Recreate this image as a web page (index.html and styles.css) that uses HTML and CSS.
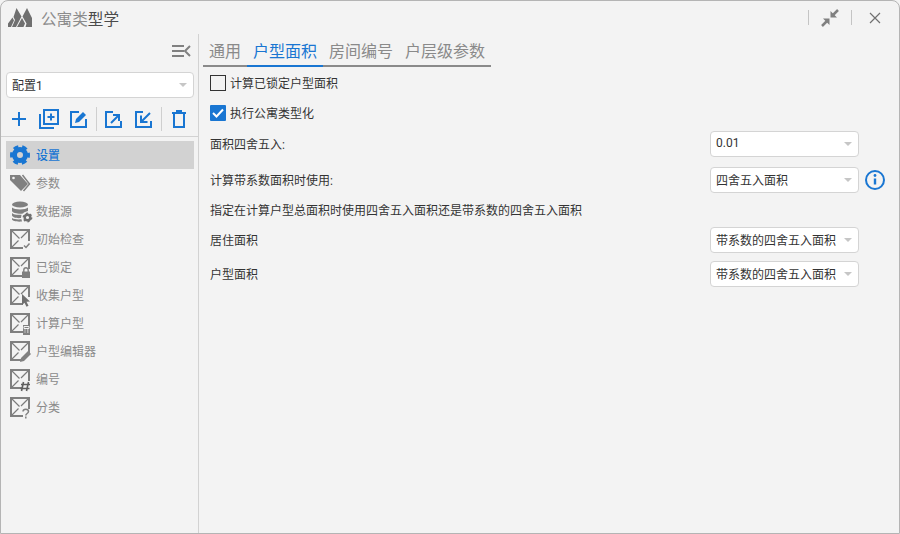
FILE: index.html

```html
<!DOCTYPE html>
<html lang="zh">
<head>
    <meta charset="UTF-8">
    <title>公寓类型学</title>
    <link rel="stylesheet" href="styles.css">
</head>
<body>
    <svg class="defs" width="0" height="0">
        <symbol id="unit" viewBox="0 0 20 20">
            <path d="M13 19H1V1h18v11" fill="none" stroke="#808080" stroke-width="2"/>
            <path d="M1 1l8.500 8.500M19 1l-8 8M1 19l7.500-7.500" fill="none" stroke="#7c7c7c" stroke-width="1.200"/>
        </symbol>
    </svg>
    <div class="window">
        <div class="titlebar">
            <svg class="logo" width="24" height="19" viewBox="0 0 24 19">
                <path d="M8.500 0l5 8.500L8 19H4l3-7-1.500-3zM4.500 9.500l1.500 3L3 19H0v-3.500zM14 10l3 5.500-1.500 3.500H9zM19 0l5 10v9h-6.500l1-3.500-4-7z" fill="#6f6f6f"/>
            </svg>
            <div class="title">公寓类<span class="dark">型学</span></div>
            <div class="winbtns">
                <span class="winsep"></span>
                <svg class="winbtn" width="18" height="18" viewBox="0 0 18 18">
                    <path d="M9.500 8.500V2l6.500 6.500zM8.500 9.500V16L2 9.500z" fill="#808080"/>
                    <path d="M17 1l-5 5M1 17l5-5" stroke="#808080" stroke-width="2.500"/>
                </svg>
                <span class="winsep sep2"></span>
                <svg class="winbtn close" width="12" height="12" viewBox="0 0 12 12">
                    <path d="M1 1l10 10M11 1L1 11" stroke="#707070" stroke-width="1.200" fill="none"/>
                </svg>
            </div>
        </div>
        <div class="body">
            <div class="sidebar">
                <div class="collapse">
                    <svg width="19" height="12" viewBox="0 0 19 12">
                        <path d="M0 1h12M0 6h12M0 11h12M18 1l-5 5 5 5" stroke="#808080" stroke-width="2" fill="none"/>
                    </svg>
                </div>
                <div class="select cfg"><span>配置1</span><i class="arrow"></i></div>
                <div class="toolbar">
                    <div class="tool"><svg width="16" height="16" viewBox="0 0 16 16"><path d="M8 1v14M1 8h14" stroke="#1976d2" stroke-width="2" fill="none"/></svg></div>
                    <div class="tool"><svg width="20" height="20" viewBox="0 0 20 20"><path d="M1 5v14h14M5 1h14v14H5zM12 4.500v7M8.500 8h7" stroke="#1976d2" stroke-width="2" fill="none"/></svg></div>
                    <div class="tool"><svg width="18" height="18" viewBox="0 0 18 18"><path d="M9 2H1v15h15V9" stroke="#1976d2" stroke-width="2" fill="none"/><path d="M5 13l1-4 7-7 3 3-7 7z" fill="#1976d2"/></svg></div>
                    <span class="toolsep"></span>
                    <div class="tool"><svg width="18" height="18" viewBox="0 0 18 18"><path d="M8 2H1v15h15v-6M6 13l8-8M8 5h6v6" stroke="#1976d2" stroke-width="2" fill="none"/></svg></div>
                    <div class="tool"><svg width="18" height="18" viewBox="0 0 18 18"><path d="M8 2H1v15h15v-6M15 3l-9 9M6 5.500V12h6.500" stroke="#1976d2" stroke-width="2" fill="none"/></svg></div>
                    <span class="toolsep"></span>
                    <div class="tool"><svg width="14" height="18" viewBox="0 0 14 18"><path d="M0 3h14M4 1h6M2 3v14h10V3" stroke="#1976d2" stroke-width="2" fill="none"/></svg></div>
                </div>
                <div class="nav">
                    <div class="navitem active">
                        <svg width="20" height="20" viewBox="0 0 20 20"><circle cx="10" cy="10" r="5.500" fill="none" stroke="#1976d2" stroke-width="5"/><circle cx="10" cy="10" r="8.500" fill="none" stroke="#1976d2" stroke-width="3" stroke-dasharray="5 3.900" stroke-dashoffset="2.500"/></svg>
                        <span>设置</span>
                    </div>
                    <div class="navitem">
                        <svg width="20" height="20" viewBox="0 0 20 20"><path d="M0 2h10l8 9-7 7L0 7z" fill="#808080"/><path d="M12.500 2l7 9-6 7" stroke="#808080" stroke-width="1.500" fill="none"/><circle cx="3.500" cy="5" r="1.300" fill="#f3f3f3"/></svg>
                        <span>参数</span>
                    </div>
                    <div class="navitem">
                        <svg class="wide" width="22" height="22" viewBox="0 0 22 22"><ellipse cx="10" cy="4.500" rx="8" ry="3" fill="#808080"/><path d="M2 7.500c2 2.500 14 2.500 16 0V11c-2 .5-4 1-5 2.500-4 .5-10 0-11-2.500zM2 13c2 2 6 2 9.500 1.700L11 18c-4 .5-8.500-.5-9-2.500zM2 18c2 1.500 6 1.500 9.500 1.300l.5 2.200C7 22 2.500 21 2 19.500z" fill="#808080"/><circle cx="17.500" cy="17.500" r="2.800" fill="none" stroke="#707070" stroke-width="2.400"/><circle cx="17.500" cy="17.500" r="4.200" fill="none" stroke="#707070" stroke-width="1.400" stroke-dasharray="2 2.400"/></svg>
                        <span>数据源</span>
                    </div>
                    <div class="navitem">
                        <svg class="unit" width="20" height="22" viewBox="0 0 20 22"><use href="#unit" width="20" height="20"/><path d="M14 16.500l2 2 3.500-4" stroke="#808080" stroke-width="1.500" fill="none"/></svg>
                        <span>初始检查</span>
                    </div>
                    <div class="navitem">
                        <svg class="unit" width="20" height="22" viewBox="0 0 20 22"><use href="#unit" width="20" height="20"/><path d="M12 14.500h8V21h-8z" fill="#808080"/><path d="M13.800 15v-2a2.200 2.200 0 0 1 4.400 0v2" stroke="#808080" stroke-width="1.400" fill="none"/></svg>
                        <span>已锁定</span>
                    </div>
                    <div class="navitem">
                        <svg class="unit" width="20" height="22" viewBox="0 0 20 22"><use href="#unit" width="20" height="20"/><path d="M12 9l8 7.500-3.500.3 2 4-2 1-2-4L12 20z" fill="#707070"/></svg>
                        <span>收集户型</span>
                    </div>
                    <div class="navitem">
                        <svg class="unit" width="20" height="22" viewBox="0 0 20 22"><use href="#unit" width="20" height="20"/><path d="M13 12h7v10h-7z" fill="#808080"/><path d="M14 13.500h5v2h-5zM14.500 17h1M17 17h1.500M14.500 19h1M17 19h1.500" stroke="#f3f3f3" fill="none"/></svg>
                        <span>计算户型</span>
                    </div>
                    <div class="navitem">
                        <svg class="unit" width="20" height="22" viewBox="0 0 20 22"><use href="#unit" width="20" height="20"/><path d="M10 21l1-4 7-7 3 3-7 7z" fill="#808080"/></svg>
                        <span>户型编辑器</span>
                    </div>
                    <div class="navitem">
                        <svg class="unit" width="20" height="22" viewBox="0 0 20 22"><use href="#unit" width="20" height="20"/><path d="M13.500 13l-2 9M18.500 13l-2 9M11 15.500h9M10.500 19.500h9" stroke="#606060" stroke-width="1.600" fill="none"/></svg>
                        <span>编号</span>
                    </div>
                    <div class="navitem">
                        <svg class="unit" width="20" height="22" viewBox="0 0 20 22"><use href="#unit" width="20" height="20"/><path d="M13 14.500c0-3 5.500-3 5.500 0 0 2-2.700 2-2.700 4M15.800 19.500v2" stroke="#808080" stroke-width="1.500" fill="none"/></svg>
                        <span>分类</span>
                    </div>
                </div>
            </div>
            <div class="main">
                <div class="tabs">
                    <div class="tab">通用</div>
                    <div class="tab active">户型面积</div>
                    <div class="tab">房间编号</div>
                    <div class="tab">户层级参数</div>
                </div>
                <div class="content">
                    <label class="check"><span class="box"></span><span class="text">计算已锁定户型面积</span></label>
                    <label class="check"><span class="box on"><svg width="16" height="16" viewBox="0 0 16 16"><path d="M3 8l3.500 3.500L13 4.500" stroke="#fff" stroke-width="2" fill="none"/></svg></span><span class="text">执行公寓类型化</span></label>
                    <div class="row first">
                        <div class="label">面积四舍五入:</div>
                        <div class="select"><span>0.01</span><i class="arrow"></i></div>
                    </div>
                    <div class="row">
                        <div class="label">计算带系数面积时使用:</div>
                        <div class="select"><span>四舍五入面积</span><i class="arrow"></i></div>
                        <svg class="info" width="22" height="22" viewBox="0 0 22 22"><circle cx="11" cy="11" r="9" fill="none" stroke="#1976d2" stroke-width="2"/><path d="M11 9.500v6" stroke="#1976d2" stroke-width="2.400"/><circle cx="11" cy="6.500" r="1.400" fill="#1976d2"/></svg>
                    </div>
                    <div class="desc">指定在计算户型总面积时使用四舍五入面积还是带系数的四舍五入面积</div>
                    <div class="row after-desc">
                        <div class="label">居住面积</div>
                        <div class="select"><span>带系数的四舍五入面积</span><i class="arrow"></i></div>
                    </div>
                    <div class="row tight">
                        <div class="label">户型面积</div>
                        <div class="select"><span>带系数的四舍五入面积</span><i class="arrow"></i></div>
                    </div>
                </div>
            </div>
        </div>
    </div>
</body>
</html>
```

FILE: styles.css

```css
* { box-sizing: border-box; }
body { margin: 0; font-family: Roboto, "Noto Sans CJK SC", sans-serif; font-size: 12px; color: #333; background: #f3f3f3; overflow: hidden; }
.defs { display: block; height: 0; }

.window { width: 900px; height: 534px; background: #f3f3f3; border: 1px solid #b4b4b4; border-radius: 8px 8px 0 0; display: flex; flex-direction: column; }

.titlebar { height: 33px; flex: none; display: flex; align-items: center; padding-left: 7px; }
.logo { flex: none; }
.title { margin-left: 9px; font-size: 15.600px; color: #8c8c8c; }
.title .dark { color: #4a4a4a; }
.winbtns { margin-left: auto; display: flex; align-items: center; height: 100%; }
.winsep { width: 1px; height: 15px; background: #c4c4c4; }
.winbtn { margin-left: 12px; }
.sep2 { margin-left: 12px; }
.close { margin: 0 18px 0 17px; }

.body { flex: 1; display: flex; min-height: 0; }

.sidebar { width: 198px; flex: none; border-right: 1px solid #d2d2d2; padding: 0 4px 0 5px; }
.collapse { height: 38px; display: flex; justify-content: flex-end; align-items: flex-start; padding: 11px 3px 0 0; }
.select { height: 26px; width: 149px; flex: none; background: #fff; border: 1px solid #d4d4d4; border-radius: 4px; display: flex; align-items: center; justify-content: space-between; padding: 0 6px 0 5px; color: #333; }
.select span { padding-bottom: 2px; }
.select.cfg { width: 188px; }
.arrow { width: 0; height: 0; border-left: 4px solid transparent; border-right: 4px solid transparent; border-top: 4px solid #c6c6c6; }

.toolbar { display: flex; align-items: center; height: 28px; margin: 7px 0 3px -2px; }
.tool { width: 30px; height: 28px; flex: none; display: flex; align-items: center; justify-content: center; }
.toolsep { width: 1px; height: 24px; margin: 0 2px; background: #cfcfcf; }

.nav { margin-left: -5px; margin-right: -4px; border-top: 1px solid #d2d2d2; padding: 4px 4px 0 5px; }
.navitem { height: 28px; display: flex; align-items: center; gap: 6px; padding-left: 4px; color: #8a8a8a; }
.navitem span { padding-bottom: 2px; }
.navitem svg { flex: none; overflow: visible; }
.navitem svg.wide { margin-right: -2px; }
.navitem svg.unit { margin-top: 2px; }
.navitem.active { background: #d2d2d2; color: #1976d2; font-weight: 500; }

.main { flex: 1; padding: 0 0 0 4px; min-width: 0; }
.tabs { display: inline-flex; height: 32px; margin-top: 1px; border-bottom: 2px solid #8a8a8a; }
.tab { font-size: 16px; color: #8a8a8a; padding: 0 6px; line-height: 33px; height: 32px; border-bottom: 2px solid transparent; white-space: nowrap; }
.tab.active { color: #1976d2; border-bottom-color: #1976d2; }

.content { padding: 1px 0 0 7px; }
.check { height: 30px; display: flex; align-items: center; gap: 4px; }
.check .text { padding-bottom: 2px; }
.box { width: 16px; height: 16px; border: 1px solid #333; display: flex; }
.box.on { background: #1976d2; border: none; border-radius: 1px; }

.row { display: flex; align-items: center; height: 26px; margin-top: 10px; }
.row.first { margin-top: 3px; }
.row.after-desc { margin-top: 0; }
.row.tight { margin-top: 8px; }
.label { width: 500px; flex: none; padding-bottom: 2px; }
.desc { height: 34px; display: flex; align-items: center; padding-bottom: 2px; }
.info { margin-left: 5px; flex: none; }
```
